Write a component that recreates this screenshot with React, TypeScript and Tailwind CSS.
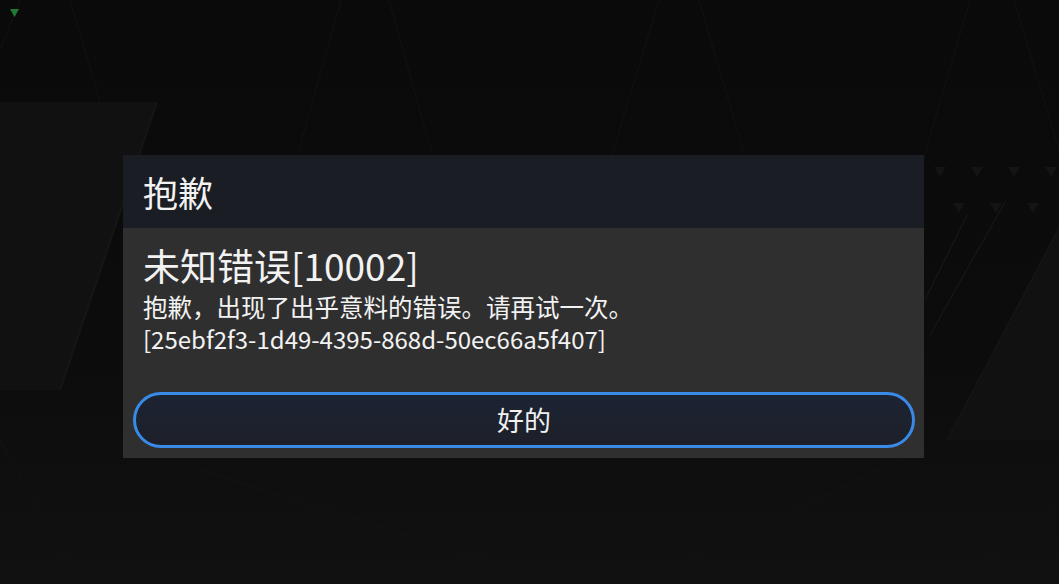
import React from "react";

const font = { fontFamily: '"Noto Sans CJK SC", "Noto Sans", sans-serif' };

function Backdrop() {
  return (
    <svg
      className="absolute inset-0 h-full w-full"
      viewBox="0 0 1059 584"
      preserveAspectRatio="none"
    >
      <defs>
        <linearGradient id="bg" x1="0" y1="0" x2="0" y2="1">
          <stop offset="0" stopColor="#0a0a0a" />
          <stop offset="0.6" stopColor="#0c0c0c" />
          <stop offset="1" stopColor="#111111" />
        </linearGradient>
      </defs>
      <rect width="1059" height="584" fill="url(#bg)" />
      {/* faint top zigzag */}
      <g stroke="#121212" strokeWidth="1" fill="none">
        <path d="M0 50 L20 0" />
        <path d="M70 0 L159 300" />
        <path d="M341 0 L257 300" />
        <path d="M389 0 L473 300" />
        <path d="M659 0 L568 300" />
        <path d="M699 0 L787 300" />
        <path d="M970 0 L882 300" />
        <path d="M1014 0 L1059 150" />
      </g>
      {/* left panel */}
      <polygon points="0,102 157,102 60,390 0,390" fill="#111111" />
      <path d="M157 102 L60 390" stroke="#161616" strokeWidth="2" />
      {/* right panels */}
      <polygon points="1059,228 947,440 1059,440" fill="#111111" />
      <g stroke="#171717" strokeWidth="1.2">
        <path d="M967 215 L925 300" />
        <path d="M1005 202 L930 335" />
        <path d="M1059 228 L947 440" />
      </g>
      <g fill="#141414">
        <polygon points="934,167 946,167 940,177" />
        <polygon points="971,167 983,167 977,177" />
        <polygon points="1008,167 1020,167 1014,177" />
        <polygon points="1045,167 1057,167 1051,177" />
        <polygon points="953,203 965,203 959,213" />
        <polygon points="990,203 1002,203 996,213" />
        <polygon points="1027,203 1039,203 1033,213" />
      </g>
      {/* bottom faint lines */}
      <g stroke="#141414" strokeWidth="1" fill="none">
        <path d="M0 440 L80 584" />
        <path d="M200 470 L560 584" />
        <path d="M640 584 L900 460" />
        <path d="M960 584 L1059 500" />
      </g>
      <polygon points="10,9 19,9 14.5,17" fill="#1f7a33" />
    </svg>
  );
}

export default function App() {
  return (
    <div className="relative h-[584px] w-[1059px] overflow-hidden bg-[#0b0b0b]" style={font}>
      <Backdrop />
      <div className="relative pt-[155px] pl-[123px]">
        <div className="w-[801px] text-[#f2f2f2]">
          <div className="flex h-[73px] items-center bg-[#1b1d25] pl-[20px] text-[35px] leading-none">
            抱歉
          </div>
          <div className="flex h-[230px] flex-col bg-[#2f2f2f] px-[10px] pb-[10px]">
            <div className="pl-[10px] pt-[17px]">
              <div className="text-[37px] leading-[40px]">未知错误[10002]</div>
              <div className="mt-[6px] text-[24.5px] leading-[32px]">
                抱歉，出现了出乎意料的错误。请再试一次。
              </div>
              <div className="text-[24px] leading-[32px]">
                [25ebf2f3-1d49-4395-868d-50ec66a5f407]
              </div>
            </div>
            <button className="mt-auto flex h-[56px] w-[782px] items-center justify-center rounded-full border-[3px] border-[#3a8be8] bg-gradient-to-b from-[#1c2333] to-[#1d2029] text-[27px] text-[#f0f0f0]">
              好的
            </button>
          </div>
        </div>
      </div>
    </div>
  );
}
